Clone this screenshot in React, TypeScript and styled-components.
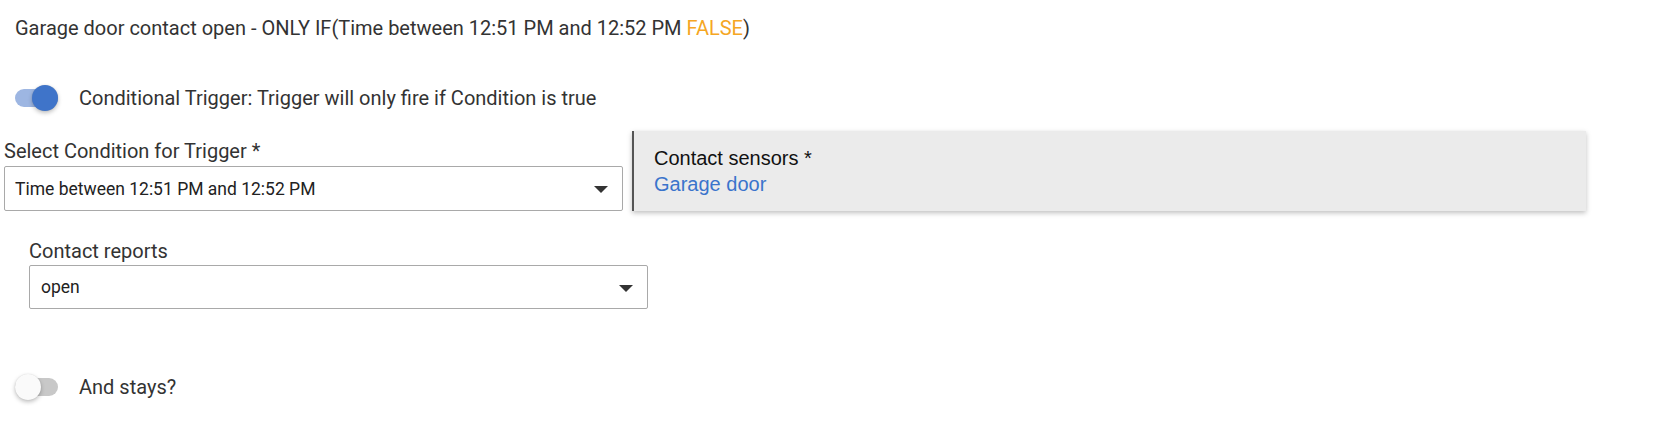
import styled, { createGlobalStyle } from 'styled-components';

const GlobalStyle = createGlobalStyle`
  body {
    margin: 0;
    background: #fff;
    font-family: Roboto, "Noto Sans", sans-serif;
    color: #333;
  }
`;

export default function App() {
  return (
    <Page>
      <GlobalStyle />
      <Title>
        Garage door contact open - ONLY IF(Time between 12:51 PM and 12:52 PM <False>FALSE</False>)
      </Title>

      <ToggleRow $top={45}>
        <Switch>
          <Track $on />
          <Thumb $on />
        </Switch>
        <ToggleLabel>Conditional Trigger: Trigger will only fire if Condition is true</ToggleLabel>
      </ToggleRow>

      <ConditionRow>
        <Field>
          <FieldLabel>Select Condition for Trigger *</FieldLabel>
          <SelectBox $pad={10}>
            <SelectValue>Time between 12:51 PM and 12:52 PM</SelectValue>
            <Caret />
          </SelectBox>
        </Field>
        <DevicePanel>
          <PanelTitle>Contact sensors *</PanelTitle>
          <PanelValue>Garage door</PanelValue>
        </DevicePanel>
      </ConditionRow>

      <Indented>
        <Field>
          <FieldLabel>Contact reports</FieldLabel>
          <SelectBox $pad={11}>
            <SelectValue>open</SelectValue>
            <Caret />
          </SelectBox>
        </Field>
      </Indented>

      <ToggleRow $top={65}>
        <Switch>
          <Track />
          <Thumb />
        </Switch>
        <ToggleLabel>And stays?</ToggleLabel>
      </ToggleRow>
    </Page>
  );
}

const Page = styled.div`
  width: 1655px;
  height: 447px;
  box-sizing: border-box;
  padding-top: 16px;
  display: flex;
  flex-direction: column;
`;

const Title = styled.div`
  margin-left: 15px;
  font-size: 20px;
  line-height: 24px;
  color: #333;
`;

const False = styled.span`
  color: #f5a623;
`;

const ToggleRow = styled.div<{ $top: number }>`
  margin-top: ${p => p.$top}px;
  margin-left: 14px;
  display: flex;
  align-items: center;
  gap: 21px;
  height: 26px;
`;

const Switch = styled.div`
  position: relative;
  width: 44px;
  height: 26px;
  flex: none;
`;

const Track = styled.div<{ $on?: boolean }>`
  position: absolute;
  left: 1px;
  top: 4px;
  width: 43px;
  height: 18px;
  border-radius: 9px;
  background: ${p => (p.$on ? '#9db6e2' : '#c8c8c8')};
`;

const Thumb = styled.div<{ $on?: boolean }>`
  position: absolute;
  top: 0;
  left: ${p => (p.$on ? '18px' : '1px')};
  width: 26px;
  height: 26px;
  border-radius: 50%;
  background: ${p => (p.$on ? '#3f74c9' : '#fafafa')};
  box-shadow: 0 2px 4px rgba(0, 0, 0, 0.25), 0 0 1px rgba(0, 0, 0, 0.15);
`;

const ToggleLabel = styled.span`
  font-size: 20px;
  color: #333;
`;

const ConditionRow = styled.div`
  margin-top: 20px;
  margin-left: 4px;
  display: flex;
  align-items: flex-end;
  gap: 9px;
`;

const Field = styled.div`
  width: 619px;
  display: flex;
  flex-direction: column;
`;

const FieldLabel = styled.label`
  font-size: 20px;
  line-height: 24px;
  color: #333;
  margin-bottom: 3px;
`;

const SelectBox = styled.div<{ $pad: number }>`
  height: 45px;
  box-sizing: border-box;
  border: 1px solid #a9a9a9;
  border-radius: 2px;
  display: flex;
  align-items: center;
  padding: 0 14px 0 ${p => p.$pad}px;
`;

const SelectValue = styled.span`
  flex: 1;
  font-size: 17.5px;
  color: #222;
`;

const Caret = styled.span`
  width: 0;
  height: 0;
  margin-top: 2px;
  border-left: 7px solid transparent;
  border-right: 7px solid transparent;
  border-top: 7px solid #333;
`;

const DevicePanel = styled.div`
  width: 954px;
  height: 80px;
  box-sizing: border-box;
  background: #ebebeb;
  border-left: 2px solid #555;
  box-shadow: 0 2px 5px rgba(0, 0, 0, 0.25);
  padding: 14px 0 0 20px;
  font-family: "Liberation Sans", Arial, sans-serif;
`;

const PanelTitle = styled.div`
  font-size: 20px;
  line-height: 26px;
  color: #111;
`;

const PanelValue = styled.div`
  font-size: 20px;
  line-height: 26px;
  color: #3a74cc;
`;

const Indented = styled.div`
  margin-top: 28px;
  margin-left: 29px;

  ${FieldLabel} {
    margin-bottom: 2px;
  }

  ${SelectBox} {
    height: 44px;
  }
`;
